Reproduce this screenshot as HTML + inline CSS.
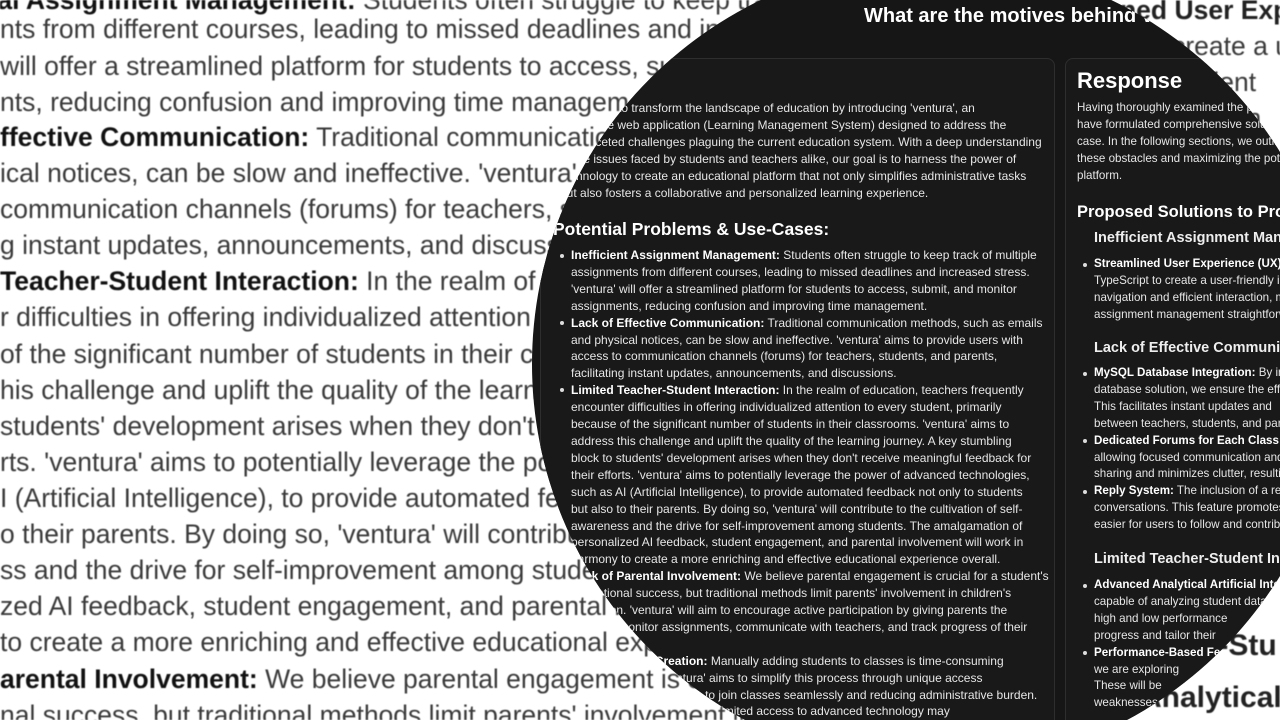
<!DOCTYPE html>
<html><head><meta charset="utf-8"><style>
html,body{margin:0;padding:0;width:1280px;height:720px;overflow:hidden;background:#fff;position:relative}
.bg{position:absolute;left:0;top:0;width:1280px;height:720px;overflow:hidden;font-family:"Liberation Sans",sans-serif;font-size:26.5px;color:#3a3a3a;filter:blur(0.4px)}
.bg div{position:absolute;left:0;white-space:nowrap;line-height:36px}
.bg b{color:#111}
.circ{position:absolute;left:532px;top:-40px;width:808px;height:808px;border-radius:50%;overflow:hidden;background:#161616}
.in{position:absolute;left:-532px;top:40px;width:1280px;height:720px;overflow:hidden;font-family:"Liberation Sans",sans-serif;color:#e6e6e6}
.card{position:absolute;top:58px;height:700px;background:#191919;border:1px solid #2e2e2e;border-radius:8px}
.t{position:absolute;white-space:nowrap;font-size:12px;line-height:16.9px}
.t b{color:#fff}
.r{font-size:11.6px}
.dot{position:absolute;width:4px;height:4px;border-radius:50%;background:#ddd}
</style></head><body>
<div class="bg">
<div style="top:-18px;left:-10px"><b>ial Assignment Management:</b> Students often struggle to keep track</div>
<div style="top:11px">nts from different courses, leading to missed deadlines and incr</div>
<div style="top:48px">will offer a streamlined platform for students to access, sub</div>
<div style="top:84px">nts, reducing confusion and improving time managem</div>
<div style="top:119px"><b>ffective Communication:</b> Traditional communication</div>
<div style="top:155px">ical notices, can be slow and ineffective. 'ventura'</div>
<div style="top:191px">communication channels (forums) for teachers, s</div>
<div style="top:227px">g instant updates, announcements, and discussi</div>
<div style="top:263px"><b>Teacher-Student Interaction:</b> In the realm of edu</div>
<div style="top:299px">r difficulties in offering individualized attention</div>
<div style="top:336px">of the significant number of students in their cl</div>
<div style="top:372px">his challenge and uplift the quality of the learni</div>
<div style="top:408px">students' development arises when they don't re</div>
<div style="top:444px">rts. 'ventura' aims to potentially leverage the pow</div>
<div style="top:480px">I (Artificial Intelligence), to provide automated fe</div>
<div style="top:516px">o their parents. By doing so, 'ventura' will contribu</div>
<div style="top:552px">ss and the drive for self-improvement among studen</div>
<div style="top:588px">zed AI feedback, student engagement, and parental in</div>
<div style="top:624px">to create a more enriching and effective educational exp</div>
<div style="top:661px"><b>arental Involvement:</b> We believe parental engagement is cru</div>
<div style="top:697px">nal success, but traditional methods limit parents' involvement in</div>
<div style="top:-8px;left:1120px;font-weight:bold;color:#222">ned User Experience</div>
<div style="top:28px;left:1150px">o create a user</div>
<div style="top:64px;left:1180px">fficient</div>
<div style="top:100px;left:1195px">emen</div>
<div style="top:628px;left:1190px;font-size:30px;font-weight:bold;color:#222">er-Stu</div>
<div style="top:680px;left:1140px;font-size:30px;font-weight:bold;color:#222">Analytical A</div>
</div>

<div class="circ"><div class="in">
<div style="position:absolute;left:864px;top:5px;font-size:20px;font-weight:bold;color:#fff;white-space:nowrap">What are the motives behind ventura?</div>
<div class="card" style="left:540px;width:513px"></div>
<div class="card" style="left:1065px;width:300px"></div>

<div class="t" style="left:560px;top:100px">Our aim is to transform the landscape of education by introducing 'ventura', an<br>innovative web application (Learning Management System) designed to address the<br>multifaceted challenges plaguing the current education system. With a deep understanding<br>of the issues faced by students and teachers alike, our goal is to harness the power of<br>technology to create an educational platform that not only simplifies administrative tasks<br>but also fosters a collaborative and personalized learning experience.</div>
<div style="position:absolute;left:553px;top:219px;font-size:17.5px;font-weight:bold;color:#fff;white-space:nowrap">Potential Problems &amp; Use-Cases:</div>
<div class="dot" style="left:560px;top:254px"></div>
<div class="dot" style="left:560px;top:321px"></div>
<div class="dot" style="left:560px;top:388px"></div>
<div class="dot" style="left:560px;top:575px"></div>
<div class="dot" style="left:560px;top:659px"></div>
<div class="t" style="left:571px;top:247px"><b>Inefficient Assignment Management:</b> Students often struggle to keep track of multiple<br>assignments from different courses, leading to missed deadlines and increased stress.<br>'ventura' will offer a streamlined platform for students to access, submit, and monitor<br>assignments, reducing confusion and improving time management.<br><b>Lack of Effective Communication:</b> Traditional communication methods, such as emails<br>and physical notices, can be slow and ineffective. 'ventura' aims to provide users with<br>access to communication channels (forums) for teachers, students, and parents,<br>facilitating instant updates, announcements, and discussions.<br><b>Limited Teacher-Student Interaction:</b> In the realm of education, teachers frequently<br>encounter difficulties in offering individualized attention to every student, primarily<br>because of the significant number of students in their classrooms. 'ventura' aims to<br>address this challenge and uplift the quality of the learning journey. A key stumbling<br>block to students' development arises when they don't receive meaningful feedback for<br>their efforts. 'ventura' aims to potentially leverage the power of advanced technologies,<br>such as AI (Artificial Intelligence), to provide automated feedback not only to students<br>but also to their parents. By doing so, 'ventura' will contribute to the cultivation of self-<br>awareness and the drive for self-improvement among students. The amalgamation of<br>personalized AI feedback, student engagement, and parental involvement will work in<br>harmony to create a more enriching and effective educational experience overall.<br><b>Lack of Parental Involvement:</b> We believe parental engagement is crucial for a student's<br>educational success, but traditional methods limit parents' involvement in children's<br>education. 'ventura' will aim to encourage active participation by giving parents the<br>ability to monitor assignments, communicate with teachers, and track progress of their<br>children.<br><b>Tedious Class Creation:</b> Manually adding students to classes is time-consuming<br>and error-prone. 'ventura' aims to simplify this process through unique access<br>codes, allowing students to join classes seamlessly and reducing administrative burden.<br>Accessibility: Students with limited access to advanced technology may</div>

<div style="position:absolute;left:1077px;top:68px;font-size:22px;font-weight:bold;color:#fff;white-space:nowrap">Response</div>
<div class="t r" style="left:1077px;top:100px">Having thoroughly examined the problems at hand, we<br>have formulated comprehensive solutions for each use<br>case. In the following sections, we outline our approach to<br>these obstacles and maximizing the potential of our<br>platform.</div>
<div style="position:absolute;left:1077px;top:203px;font-size:16.5px;font-weight:bold;color:#fff;white-space:nowrap">Proposed Solutions to Problems</div>
<div style="position:absolute;left:1094px;top:230px;font-size:14.5px;font-weight:bold;color:#eee;white-space:nowrap">Inefficient Assignment Management</div>
<div class="dot" style="left:1083px;top:263px"></div>
<div class="t r" style="left:1094px;top:256px"><b>Streamlined User Experience (UX):</b> We use<br>TypeScript to create a user-friendly interface<br>navigation and efficient interaction, making<br>assignment management straightforward.</div>
<div style="position:absolute;left:1094px;top:340px;font-size:14.5px;font-weight:bold;color:#eee;white-space:nowrap">Lack of Effective Communication</div>
<div class="dot" style="left:1083px;top:372px"></div>
<div class="dot" style="left:1083px;top:439px"></div>
<div class="dot" style="left:1083px;top:490px"></div>
<div class="t r" style="left:1094px;top:365px"><b>MySQL Database Integration:</b> By integrating<br>database solution, we ensure the efficient<br>This facilitates instant updates and<br>between teachers, students, and parents.<br><b>Dedicated Forums for Each Class:</b> Each<br>allowing focused communication and<br>sharing and minimizes clutter, resulting<br><b>Reply System:</b> The inclusion of a reply<br>conversations. This feature promotes<br>easier for users to follow and contribute.</div>
<div style="position:absolute;left:1094px;top:551px;font-size:14.5px;font-weight:bold;color:#eee;white-space:nowrap">Limited Teacher-Student Interaction</div>
<div class="dot" style="left:1083px;top:584px"></div>
<div class="dot" style="left:1083px;top:651px"></div>
<div class="t r" style="left:1094px;top:577px"><b>Advanced Analytical Artificial Intelligence:</b><br>capable of analyzing student data<br>high and low performance<br>progress and tailor their<br><b>Performance-Based Feedback:</b><br>we are exploring<br>These will be<br>weaknesses</div>
</div></div>
</body></html>
